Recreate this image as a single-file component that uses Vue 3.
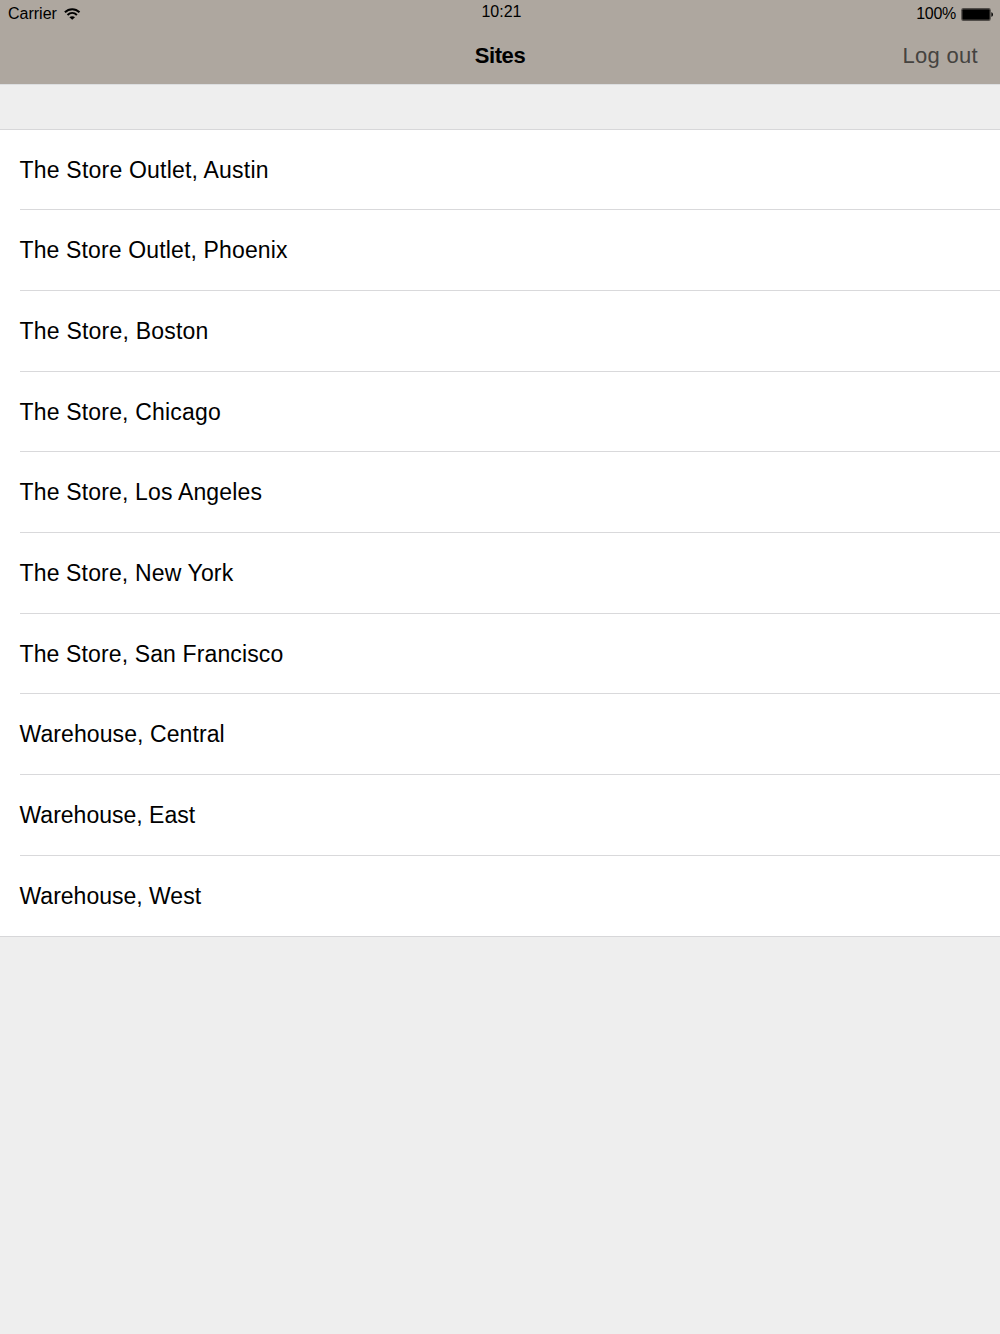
<script setup>
const sites = [
  { name: 'The Store Outlet, Austin', tracking: 0.21 },
  { name: 'The Store Outlet, Phoenix', tracking: 0.14 },
  { name: 'The Store, Boston', tracking: 0.22 },
  { name: 'The Store, Chicago', tracking: 0.18 },
  { name: 'The Store, Los Angeles', tracking: 0.16 },
  { name: 'The Store, New York', tracking: 0.15 },
  { name: 'The Store, San Francisco', tracking: 0.13 },
  { name: 'Warehouse, Central', tracking: 0.09 },
  { name: 'Warehouse, East', tracking: 0 },
  { name: 'Warehouse, West', tracking: 0 },
]
</script>

<template>
  <div class="screen">
    <header class="top">
      <div class="status">
        <div class="carrier">
          <span>Carrier</span>
          <svg class="wifi" width="17" height="12" viewBox="0 0 17 12">
            <path d="M.9 4.2C5.1 .1 11.3 .1 15.5 4.2" />
            <path d="M3.5 6.9C6.3 4.3 10.1 4.3 12.9 6.9" />
            <path class="dot" d="M8.2 11.8L5.4 9.2C6.9 7.8 9.5 7.8 11 9.2Z" />
          </svg>
        </div>
        <time class="time">10:21</time>
        <div class="power">
          <span class="percent">100%</span>
          <svg width="32" height="13" viewBox="0 0 32 13">
            <rect x=".2" y="0" width="29.6" height="13" rx="2.2" fill="#514d49" />
            <rect x="1.5" y="1.5" width="27" height="10" rx=".8" />
            <path d="M30.4 4.2C32.5 4.8 32.5 8.2 30.4 8.8Z" />
          </svg>
        </div>
      </div>
      <nav class="nav">
        <span></span>
        <h1>Sites</h1>
        <a class="logout">Log out</a>
      </nav>
    </header>
    <ul class="list">
      <li v-for="site in sites" :key="site.name">
        <span :style="{ letterSpacing: site.tracking + 'px' }">{{ site.name }}</span>
      </li>
    </ul>
  </div>
</template>

<style>
body { margin: 0; background: #eee; }
</style>

<style scoped>
.screen { height: 1334px; overflow: hidden; background: #eee; color: #000; font-family: "Liberation Sans", Arial, sans-serif; }
.top { height: 84px; background: #aea79f; border-bottom: 1px solid #dcdee0; }
.status, .nav { display: grid; grid-template-columns: 1fr auto 1fr; }
.status { height: 27px; padding: 0 7px 0 8px; font-size: 16px; line-height: 28px; }
.carrier, .power { display: flex; align-items: center; gap: 7px; }
.power { justify-content: flex-end; gap: 5px; }
.percent { letter-spacing: -.3px; }
.wifi path { fill: none; stroke: #000; stroke-width: 2; }
.wifi .dot { fill: #000; stroke: none; }
.time { padding-left: 2px; line-height: 24px; }
.nav { height: 57px; padding: 0 22px; line-height: 57px; }
h1 { margin: 0; font-size: 22px; font-weight: 700; letter-spacing: -.4px; }
.logout { justify-self: end; color: #454340; font-size: 22px; letter-spacing: .3px; }
.list { margin: 43.6px 0 0; padding: 0; list-style: none; background: #fff; border-top: 1px solid #d7d7d9; border-bottom: 1px solid #d7d7d9; }
li { height: 80.7px; box-sizing: border-box; margin-left: 19.5px; border-bottom: 1px solid #d9d9db; font-size: 23px; line-height: 80px; }
li:last-child { height: 80px; border: 0; }
</style>
